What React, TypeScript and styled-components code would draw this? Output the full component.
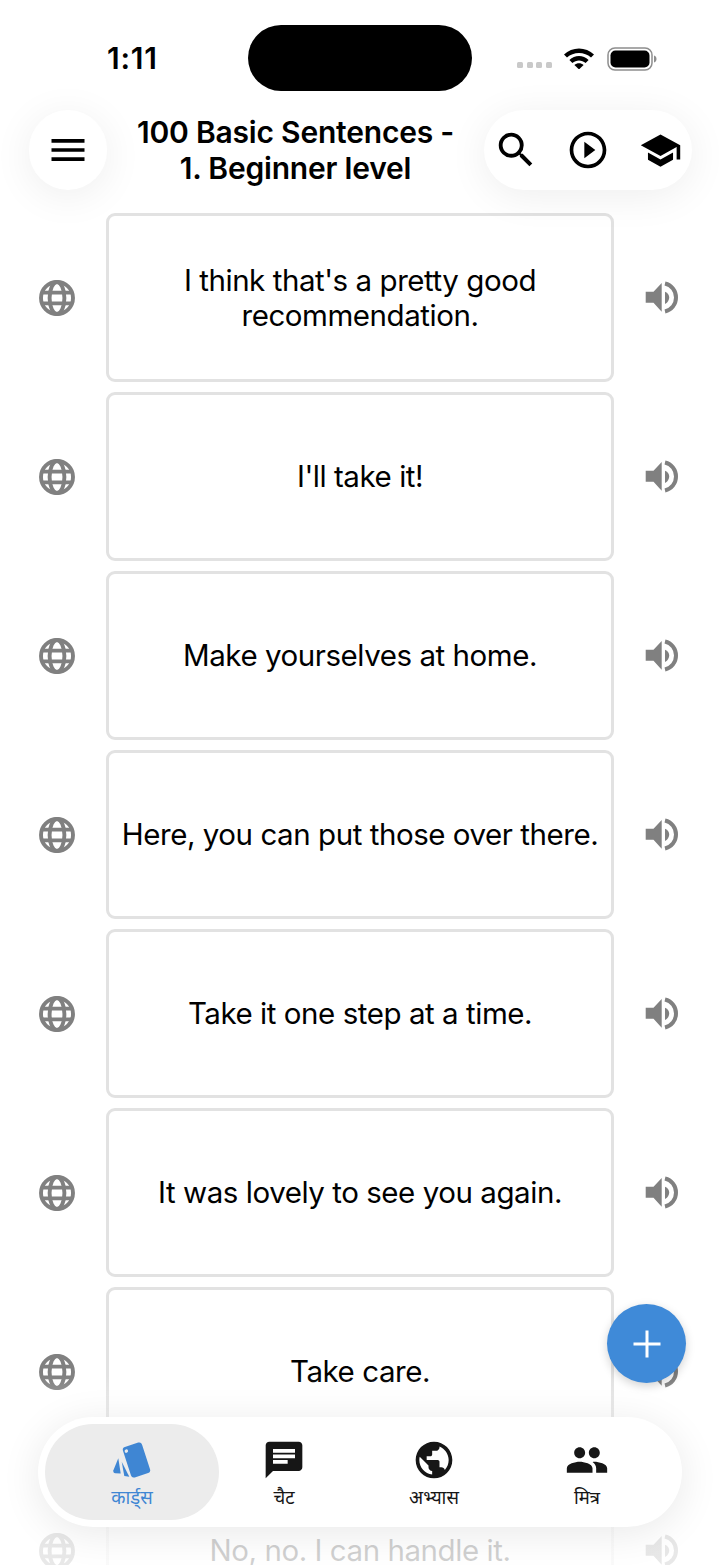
import React from 'react';
import styled, { createGlobalStyle } from 'styled-components';
import {
  MdChat,
  MdMenu,
  MdPeople,
  MdPlayCircleOutline,
  MdPublic,
  MdSchool,
  MdSearch,
} from 'react-icons/md';

const GlobalStyle = createGlobalStyle`
  html, body {
    margin: 0;
    padding: 0;
    background: #fff;
  }
  * {
    box-sizing: border-box;
  }
`;

const Phone = styled.div`
  position: relative;
  width: 720px;
  height: 1565px;
  overflow: hidden;
  background: #fff;
  color: #000;
  font-family: Inter, 'Noto Sans', 'Liberation Sans', sans-serif;
`;

const StatusBar = styled.div`
  position: relative;
  height: 110px;
  padding: 25px 0 0 107px;
  display: flex;
`;

const Clock = styled.div`
  width: 141px;
  margin-top: 15px;
  font-size: 30px;
  line-height: 36px;
  font-weight: 600;
  letter-spacing: 0.8px;
`;

const Island = styled.div`
  width: 224px;
  height: 66px;
  border-radius: 33px;
  background: #000;
`;

const StatusIcons = styled.div`
  margin: 22px 0 0 45px;
  height: 22px;
  display: flex;
  align-items: flex-start;
`;

const SignalDots = styled.div`
  display: flex;
  gap: 3.5px;
  margin: 15px 11px 0 0;
`;

const SignalDot = styled.span`
  width: 6px;
  height: 6px;
  border-radius: 1.5px;
  background: #c9c9c9;
`;

const WifiWrap = styled.div`
  margin-right: 12px;
  height: 22px;
`;

const Header = styled.header`
  position: relative;
  z-index: 2;
  height: 103px;
  padding: 0 28px 0 29px;
  display: flex;
  align-items: flex-start;
`;

const RoundButton = styled.div`
  width: 78px;
  height: 80px;
  border-radius: 40px;
  background: #fff;
  box-shadow: 0 6px 40px rgba(0, 0, 0, 0.07);
  display: flex;
  align-items: center;
  justify-content: center;
  flex-shrink: 0;
`;

const Title = styled.h1`
  flex: 1;
  margin: 4px 0 0;
  font-size: 30px;
  line-height: 36px;
  font-weight: 600;
  letter-spacing: -0.2px;
  text-align: center;
`;

const ActionPill = styled.div`
  width: 208px;
  height: 80px;
  border-radius: 40px;
  background: #fff;
  box-shadow: 0 6px 40px rgba(0, 0, 0, 0.07);
  display: grid;
  grid-template-columns: repeat(3, 72px);
  justify-content: center;
  align-items: center;
  justify-items: center;
`;

const List = styled.main`
  display: flex;
  flex-direction: column;
  gap: 10px;
`;

const Row = styled.section`
  display: grid;
  grid-template-columns: 106px 508px 106px;
  align-items: center;
`;

const GlobeCell = styled.div`
  display: flex;
  justify-content: center;
  padding-left: 8px;
  color: #808080;
`;

const SpeakerCell = styled.div`
  display: flex;
  justify-content: center;
  padding: 0 10px 2px 0;
  color: #808080;
`;

const Card = styled.div`
  height: 169px;
  padding: 0 8px;
  border: 3px solid #e2e2e2;
  border-radius: 9px;
  background: #fff;
  display: flex;
  align-items: center;
  justify-content: center;
  text-align: center;
  font-size: 29.5px;
  line-height: 35px;
  letter-spacing: -0.45px;
`;

const BottomFade = styled.div`
  position: absolute;
  left: 0;
  right: 0;
  bottom: 0;
  height: 190px;
  background: linear-gradient(
    to bottom,
    rgba(255, 255, 255, 0),
    rgba(255, 255, 255, 0.8) 55%,
    rgba(255, 255, 255, 0.82)
  );
`;

const TabBar = styled.nav`
  position: absolute;
  left: 38px;
  top: 1417px;
  width: 644px;
  height: 110px;
  padding: 0 18px;
  border-radius: 55px;
  background: #fff;
  box-shadow: 0 6px 40px rgba(0, 0, 0, 0.09);
  display: grid;
  grid-template-columns: 152px 152px 148px 158px;
`;

const Tab = styled.div<{ $active?: boolean }>`
  margin: 7px ${(p) => (p.$active ? '-11px' : '0')};
  padding-top: 14px;
  border-radius: 48px;
  background: ${(p) => (p.$active ? '#ececec' : 'transparent')};
  color: ${(p) => (p.$active ? '#3f86d3' : '#161616')};
  display: flex;
  flex-direction: column;
  align-items: center;
`;

const TabIcon = styled.div`
  height: 44px;
  display: flex;
  align-items: center;
  justify-content: center;
`;

const TabLabel = styled.span`
  margin-top: 2px;
  font-family: 'Noto Sans', Inter, 'Liberation Sans', sans-serif;
  font-size: 18.5px;
  line-height: 26px;
`;

const Fab = styled.div`
  position: absolute;
  left: 607px;
  top: 1304px;
  width: 79px;
  height: 79px;
  border-radius: 50%;
  background: #3f8ad8;
  box-shadow: 0 3px 10px rgba(0, 0, 0, 0.18);
  display: flex;
  align-items: center;
  justify-content: center;
  z-index: 3;
`;

const WifiIcon = () => (
  <svg width="32" height="22" viewBox="0 0 32 22">
    <path d="M1 7.5C9 -0.5 23 -0.5 31 7.5L28 10.6C21.6 4.4 10.4 4.4 4 10.6Z" fill="#000" />
    <path d="M6.4 13C11.8 7.8 20.2 7.8 25.6 13L22.6 16C18.8 12.6 13.2 12.6 9.4 16Z" fill="#000" />
    <path d="M11.4 18C14 15.6 18 15.6 20.6 18L16 22.4Z" fill="#000" />
  </svg>
);

const BatteryIcon = () => (
  <svg width="50" height="24" viewBox="0 0 50 24">
    <rect x="1" y="1" width="44" height="22" rx="7" fill="none" stroke="#8d8d8d" strokeWidth="1.5" />
    <rect x="3.5" y="3.5" width="39" height="17" rx="5" fill="#000" />
    <path d="M47 8.5C48.6 9 49.5 10.4 49.5 12C49.5 13.6 48.6 15 47 15.5Z" fill="#8d8d8d" />
  </svg>
);

const GlobeIcon = () => (
  <svg width="36" height="36" viewBox="0 0 36 36" fill="none" stroke="currentColor" strokeWidth="3.9">
    <circle cx="18" cy="18" r="16" />
    <ellipse cx="18" cy="18" rx="7.4" ry="16" />
    <path d="M3 12.6H33M3 23.4H33" />
  </svg>
);

const SpeakerIcon = () => (
  <svg width="36" height="36" viewBox="0 0 36 36">
    <path d="M1.7 12.7H9.5L17.7 4V32.7L9.5 23.7H1.7Z" fill="currentColor" />
    <path d="M21 12.7C24 14 25.2 16 25.2 18.5C25.2 21 24 23.4 21 25Z" fill="currentColor" />
    <path d="M21 4.5C27.5 6 32 11.6 32 18.5C32 25.4 27.5 31 21 32.5" fill="none" stroke="currentColor" strokeWidth="4" />
  </svg>
);

const CardsIcon = () => (
  <svg width="44" height="44" viewBox="0 0 44 44">
    <g transform="rotate(-18 26.5 22)">
      <rect x="16.5" y="6" width="20" height="32" rx="3" fill="#3f86d3" />
      <circle cx="19.6" cy="10.4" r="1.7" fill="#ececec" />
    </g>
    <path d="M8.3 20.3L3.3 32.5C3 34.2 4 35 5.2 35.2L10.7 35.6Z" fill="#3f86d3" />
    <path d="M11.7 23.7L19.3 38.7L14.3 38Z" fill="#3f86d3" />
  </svg>
);

const cards = [
  "I think that's a pretty good recommendation.",
  "I'll take it!",
  'Make yourselves at home.',
  'Here, you can put those over there.',
  'Take it one step at a time.',
  'It was lovely to see you again.',
  'Take care.',
  'No, no. I can handle it.',
];

const tabs = [
  { label: 'कार्ड्स', icon: <CardsIcon />, active: true },
  { label: 'चैट', icon: <MdChat size={44} /> },
  { label: 'अभ्यास', icon: <MdPublic size={44} /> },
  { label: 'मित्र', icon: <MdPeople size={44} /> },
];

export default function App() {
  return (
    <Phone>
      <GlobalStyle />
      <StatusBar>
        <Clock>1:11</Clock>
        <Island />
        <StatusIcons>
          <SignalDots>
            <SignalDot />
            <SignalDot />
            <SignalDot />
            <SignalDot />
          </SignalDots>
          <WifiWrap>
            <WifiIcon />
          </WifiWrap>
          <BatteryIcon />
        </StatusIcons>
      </StatusBar>

      <Header>
        <RoundButton>
          <MdMenu size={44} />
        </RoundButton>
        <Title>
          100 Basic Sentences -
          <br />
          1. Beginner level
        </Title>
        <ActionPill>
          <MdSearch size={46} />
          <MdPlayCircleOutline size={44} />
          <MdSchool size={43} />
        </ActionPill>
      </Header>

      <List>
        {cards.map((text) => (
          <Row key={text}>
            <GlobeCell>
              <GlobeIcon />
            </GlobeCell>
            <Card>{text}</Card>
            <SpeakerCell>
              <SpeakerIcon />
            </SpeakerCell>
          </Row>
        ))}
      </List>

      <BottomFade />

      <Fab>
        <svg width="30" height="30" viewBox="0 0 30 30">
          <path d="M15 1.5V28.5M1.5 15H28.5" stroke="#fff" strokeWidth="3" />
        </svg>
      </Fab>

      <TabBar>
        {tabs.map((tab) => (
          <Tab key={tab.label} $active={tab.active}>
            <TabIcon>{tab.icon}</TabIcon>
            <TabLabel>{tab.label}</TabLabel>
          </Tab>
        ))}
      </TabBar>
    </Phone>
  );
}
